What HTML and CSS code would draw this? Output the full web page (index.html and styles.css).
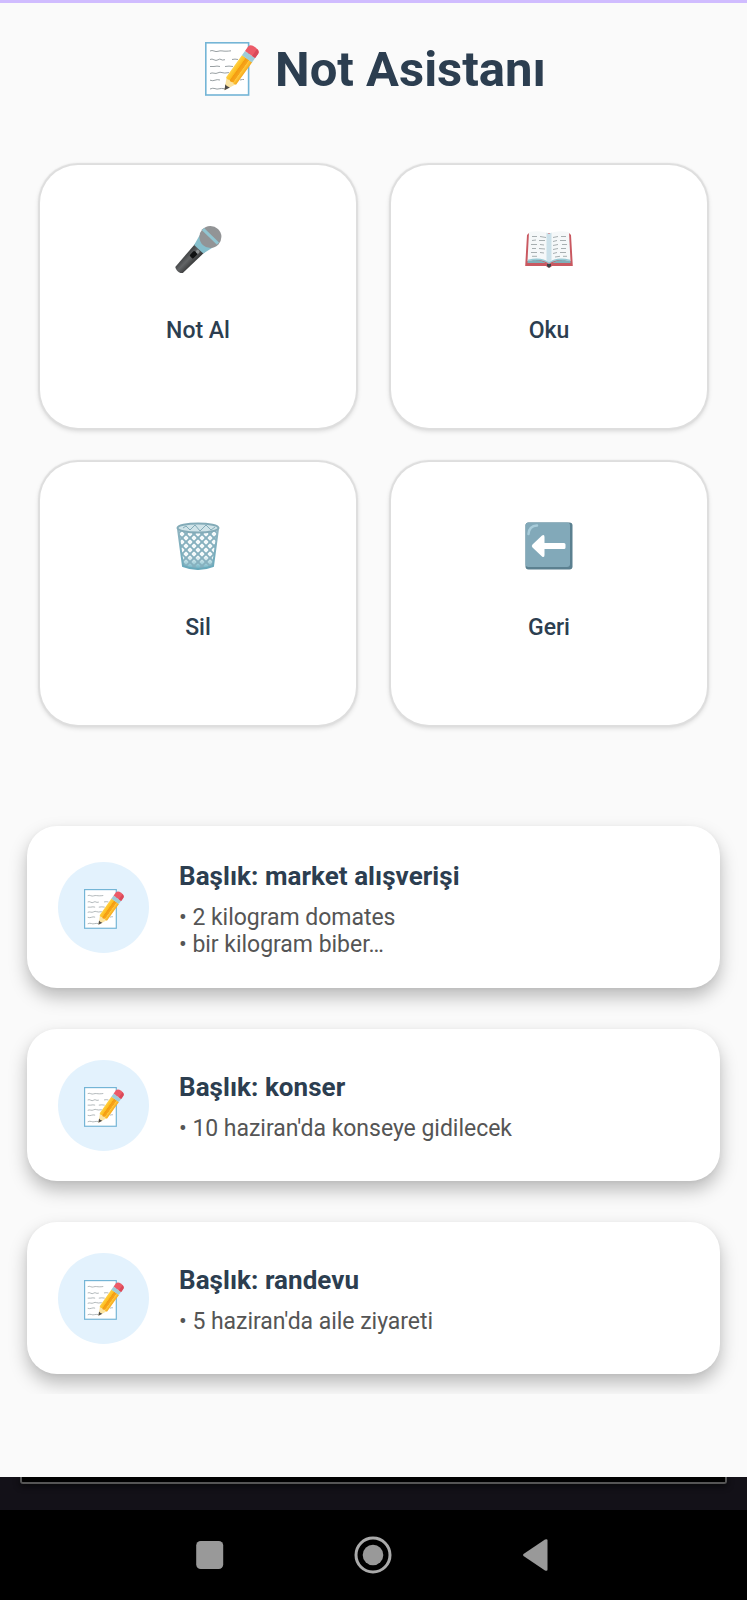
FILE: index.html
```html
<!DOCTYPE html>
<html lang="tr">
<head>
<meta charset="utf-8">
<title>Not Asistanı</title>
<link rel="stylesheet" href="styles.css">
</head>
<body>
<svg class="defs" width="0" height="0">
  <defs>
    <linearGradient id="wood" x1="0" x2="1" y1="0" y2="0">
      <stop offset="0" stop-color="#ffd044"/><stop offset=".35" stop-color="#fdbc1d"/><stop offset=".4" stop-color="#f39c12"/><stop offset=".68" stop-color="#f7a51b"/><stop offset=".72" stop-color="#ffc83a"/><stop offset="1" stop-color="#f5a81c"/>
    </linearGradient>
    <symbol id="note" viewBox="0 0 54 54">
      <rect x=".8" y=".8" width="42.8" height="52.2" fill="#fff" stroke="#74b5d6" stroke-width="1.6"/>
      <path d="M5 9q2-1 4 0t4 .3 4-.4 4 .3 5-.4M5 17.500q2-1 4 .3t4 0 3-.3 4 .2M27 17.500q3-.8 6 0M5 24.500h4q3-.8 6 0M20 24.500q4-.8 8 0M5 31.500q2-1 4-.3t4-.4 4-.2 7 0M5 38.200q3 1 5 0t5-.2M35 38q3-.8 4-.5M5 47q3-1.300 5-.4t4 .2 6 0" fill="none" stroke="#8d9598" stroke-width=".9"/>
      <g transform="translate(19.500 48.300) rotate(35.500)">
        <path d="M0 0L-6-12H6z" fill="#fbe3a0"/>
        <path d="M0 0L-2.800-5.300Q0-4 2.800-5.300z" fill="#4d4a48"/>
        <path d="M-6.200-11.500V-39H6.200v27.500Q4.200-9.500 2.100-11.500 0-9.500-2.100-11.500-4.200-9.500-6.200-11.500z" fill="url(#wood)"/>
        <rect x="-6.200" y="-44" width="12.400" height="5.300" fill="#9fccd8"/>
        <path d="M-6.200-44V-49Q-6-53 0-53T6.200-49V-44z" fill="#ec5b68"/>
        <path d="M2.500-44V-52.500Q6.200-52 6.200-49V-44z" fill="#d94a5a"/>
      </g>
    </symbol>
    <linearGradient id="bin" x1="0" x2="0" y1="0" y2="1">
      <stop offset="0" stop-color="#91b5c1"/><stop offset="1" stop-color="#69a9bb"/>
    </linearGradient>
    <pattern id="mesh" width="8" height="8" patternUnits="userSpaceOnUse" x="4" y="4">
      <path d="M0 0L8 8M8 0L0 8" stroke="#86b0be" stroke-width="1.700"/>
      <circle r="1.600" fill="#86b0be"/><circle cx="8" r="1.600" fill="#86b0be"/><circle cy="8" r="1.600" fill="#86b0be"/><circle cx="8" cy="8" r="1.600" fill="#86b0be"/><circle cx="4" cy="4" r="1.600" fill="#86b0be"/>
    </pattern>
    <linearGradient id="handle" x1="0" x2="1" y1="0" y2="0">
      <stop offset="0" stop-color="#3d3f41"/><stop offset=".45" stop-color="#626466"/><stop offset="1" stop-color="#353637"/>
    </linearGradient>
    <linearGradient id="water" x1="0" x2="0" y1="0" y2="1">
      <stop offset="0" stop-color="#67afc0" stop-opacity="0"/><stop offset="1" stop-color="#67afc0"/>
    </linearGradient>
  </defs>
</svg>
<main class="screen">
  <header class="header">
    <svg class="header-icon"><use href="#note"/></svg>
    <h1 class="title">Not Asistanı</h1>
  </header>
  <section class="actions">
    <button class="action">
      <svg class="action-icon" viewBox="0 0 48 48">
        <g transform="translate(36.400 11.900) rotate(43.500)">
          <path d="M-6.500 12H6.500L4.800 46Q0 49-4.800 46z" fill="url(#handle)"/>
          <path d="M-9 6H9L6.300 17H-6.300z" fill="#86bfcc"/>
          <circle r="11" fill="#929496"/>
          <rect x="-2.500" y="21" width="5" height="7" rx="1.500" fill="#101112"/>
          <circle cx="1" cy="19.500" r="1.800" fill="#8c9092"/>
        </g>
        <path d="M29 4.200L44 18.700" stroke="#91c5d1" stroke-width="3"/>
      </svg>
      <span class="action-label">Not Al</span>
    </button>
    <button class="action">
      <svg class="action-icon" viewBox="0 0 48 48">
        <path d="M2 10L4 8H44L46 10L47.800 41H27Q24 44 21 41H.2z" fill="#c95860"/>
        <path d="M2.500 36Q15 33 22 39H26Q33 33 45.500 36V38H27L24 41 21 38H2.500z" fill="#7fafb9"/>
        <path d="M4 7Q17 5 24 9V38Q17 32 2.500 36z" fill="#f5f8f9"/>
        <path d="M44 7Q31 5 24 9V38Q31 32 45.500 36z" fill="#f5f8f9"/>
        <path d="M21.500 7.500Q23 8 24 9 25 8 26.500 7.500V35L24 38 21.500 35z" fill="#cbe1ea"/>
        <path d="M3 35.500Q16 32 24 38 32 32 45 35.500" fill="none" stroke="#98cad5" stroke-width="1.500"/>
        <path d="M22 39H26V41L24 43 22 41z" fill="#39474b"/>
        <path d="M7 11.500h5M15 11.500l6 1M7 15.500l4-.5M14 15.500h6M6 19.500h6M15 19.500l4 .5M7 23.500h4M14 23.500l6 .5M6 27.500h6M15 27.500l4 .5M7 31.300h5M28 12.500l5-1M36 11.500h5M28 16.500l4-1M35 15.500h6M28 20.500l5-1M37 19.500h5M28 24.500l5-1M36 23.500h5M28 28.500l4-1M35 27.500h6M30 32l5-.7M38 31.300h4" fill="none" stroke="#a7afb1" stroke-width="1"/>
      </svg>
      <span class="action-label">Oku</span>
    </button>
    <button class="action">
      <svg class="action-icon" viewBox="0 0 48 48">
        <path d="M4 7L9 44Q24 50 39 44L44 7z" fill="#f5fafb"/>
        <path d="M7.500 34H40.500L39 44Q24 50 9 44z" fill="url(#water)"/>
        <path d="M4 7L9 44Q24 50 39 44L44 7z" fill="url(#mesh)"/>
        <path d="M4 7L9 44Q24 50 39 44L44 7" fill="none" stroke="url(#bin)" stroke-width="2"/>
        <ellipse cx="24" cy="6" rx="20.500" ry="4.500" fill="#cfe3e8" stroke="#83abb8" stroke-width="2"/>
        <path d="M9 6l3-2 4 4 5-5 5 6 6-6 5 5 4-3" fill="none" stroke="#83abb8" stroke-width="1"/>
      </svg>
      <span class="action-label">Sil</span>
    </button>
    <button class="action">
      <svg class="action-icon" viewBox="0 0 48 48">
        <rect x=".5" y=".5" width="47" height="47" rx="3" fill="#5b8090"/>
        <rect x=".5" y=".5" width="44.500" height="44.500" rx="3" fill="#82a9b9"/>
        <path d="M3.500 12Q4 4 12 3.500" fill="none" stroke="#a8ccda" stroke-width="2.500" stroke-linecap="round"/>
        <path d="M7.500 22.500L17 13.500Q19.500 12 19.500 15V21H39Q40.500 21 40.500 22.500V25.500Q40.500 27 39 27H19.500V33Q19.500 36 17 34.500L7.500 25.500Q6 24 7.500 22.500z" fill="#fff"/>
      </svg>
      <span class="action-label">Geri</span>
    </button>
  </section>
  <section class="notes">
    <article class="note note-tall">
      <div class="avatar"><svg class="avatar-icon"><use href="#note"/></svg></div>
      <div class="note-text">
        <h2 class="note-title">Başlık: market alışverişi</h2>
        <p class="note-body">• 2 kilogram domates<br>• bir kilogram biber…</p>
      </div>
    </article>
    <article class="note">
      <div class="avatar"><svg class="avatar-icon"><use href="#note"/></svg></div>
      <div class="note-text">
        <h2 class="note-title">Başlık: konser</h2>
        <p class="note-body">• 10 haziran'da konseye gidilecek</p>
      </div>
    </article>
    <article class="note">
      <div class="avatar"><svg class="avatar-icon"><use href="#note"/></svg></div>
      <div class="note-text">
        <h2 class="note-title">Başlık: randevu</h2>
        <p class="note-body">• 5 haziran'da aile ziyareti</p>
      </div>
    </article>
  </section>
</main>
<div class="under"><div class="under-panel"></div></div>
<nav class="navbar">
  <svg width="28" height="38" viewBox="0 0 28 38"><rect x=".2" y="5" width="27" height="28" rx="4.500" fill="#999"/></svg>
  <svg width="38" height="38" viewBox="0 0 38 38"><circle cx="19" cy="19" r="17" fill="none" stroke="#aaa" stroke-width="3"/><circle cx="19" cy="19" r="10.300" fill="#999"/></svg>
  <svg width="26" height="38" viewBox="0 0 26 38"><path d="M1.500 18Q.5 19 1.500 20L23 34.500Q25.500 35.500 25.500 33.500V4.500Q25.500 2.500 23 3.500z" fill="#999"/></svg>
</nav>
</body>
</html>
```
FILE: styles.css
```css
* { box-sizing: border-box; }
body {
  margin: 0;
  width: 747px;
  height: 1600px;
  overflow: hidden;
  background: #000;
  font-family: Roboto, "Noto Sans", sans-serif;
  color: #2c3e50;
}
.defs { position: absolute; }
.screen {
  height: 1477px;
  background: #fafafa;
  border-top: 3px solid #d0bcff;
}
.header {
  display: flex;
  justify-content: center;
  height: 162px;
  padding: 39px 0 0 4px;
  gap: 16px;
}
.header-icon { width: 54px; height: 54px; }
.title {
  margin: 0;
  padding-top: 2px;
  font-size: 49px;
  line-height: 52px;
  font-weight: 700;
  white-space: nowrap;
}
.actions {
  display: grid;
  grid-template-columns: 316px 316px;
  grid-auto-rows: 263px;
  column-gap: 35px;
  row-gap: 34px;
  padding-left: 40px;
}
.action {
  display: flex;
  flex-direction: column;
  align-items: center;
  justify-content: flex-start;
  padding: 60px 0 0;
  border: 0;
  border-radius: 38px;
  background: #fff;
  box-shadow: 0 0 1px 1.5px #dedede, 0 2px 5px 1px rgba(0, 0, 0, .15);
  font: inherit;
  color: inherit;
}
.action-icon { width: 48px; height: 48px; }
.action-label {
  margin-top: 44px;
  font-size: 23px;
  line-height: 28px;
  font-weight: 500;
}
.notes {
  display: flex;
  flex-direction: column;
  gap: 41px;
  height: 593px;
  margin-top: 76px;
  padding: 25px 27px 0;
  overflow: hidden;
}
.note {
  display: flex;
  align-items: center;
  flex: none;
  gap: 30.5px;
  height: 152px;
  padding-left: 30.5px;
  border-radius: 30px;
  background: #fff;
  box-shadow: 0 9px 18px rgba(0, 0, 0, .26), 0 1px 5px rgba(0, 0, 0, .04);
}
.note-tall { height: 162px; }
.avatar {
  display: flex;
  align-items: center;
  justify-content: center;
  width: 91px;
  height: 91px;
  border-radius: 50%;
  background: #e3f2fd;
}
.avatar-icon { width: 40px; height: 40px; margin: 3px 0 0 1px; }
.note-text { padding-top: 4px; }
.note-title {
  margin: 0 0 12px;
  font-size: 26px;
  line-height: 31px;
  font-weight: 700;
  letter-spacing: .05px;
}
.note-body {
  margin: 0;
  font-size: 23px;
  line-height: 27px;
  letter-spacing: -.03px;
  color: #555;
}
.under {
  height: 33px;
  padding: 0 20px;
  background: #131118;
  overflow: hidden;
}
.under-panel {
  height: 7px;
  border: 2px solid #555;
  border-top: 0;
  border-radius: 0 0 3px 3px;
  background: #000;
  box-shadow: 0 2px 6px #08080a;
}
.navbar {
  display: flex;
  align-items: center;
  height: 90px;
  padding-left: 196px;
  gap: 130px;
  background: #000;
}
```
